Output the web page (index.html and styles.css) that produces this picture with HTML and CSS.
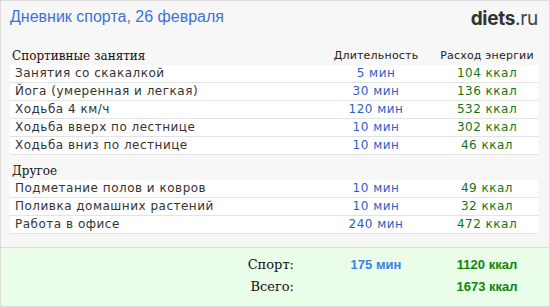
FILE: index.html
```html
<!DOCTYPE html>
<html lang="ru">
<head>
<meta charset="utf-8">
<title>Дневник спорта</title>
<link rel="stylesheet" href="styles.css">
</head>
<body>
<div class="wrap">
  <header class="top">
    <h1 class="title">Дневник спорта, 26 февраля</h1>
    <div class="logo"><b>diets</b>.ru</div>
  </header>
  <main class="main">
    <section class="section">
      <div class="head">
        <span class="sec-title">Спортивные занятия</span>
        <span class="col">Длительность</span>
        <span class="col">Расход энергии</span>
      </div>
      <div class="row"><span class="name">Занятия со скакалкой</span><span class="dur">5 мин</span><span class="kcal">104 ккал</span></div>
      <div class="row"><span class="name">Йога (умеренная и легкая)</span><span class="dur">30 мин</span><span class="kcal">136 ккал</span></div>
      <div class="row"><span class="name">Ходьба 4 км/ч</span><span class="dur">120 мин</span><span class="kcal">532 ккал</span></div>
      <div class="row"><span class="name">Ходьба вверх по лестнице</span><span class="dur">10 мин</span><span class="kcal">302 ккал</span></div>
      <div class="row"><span class="name">Ходьба вниз по лестнице</span><span class="dur">10 мин</span><span class="kcal">46 ккал</span></div>
    </section>
    <section class="section">
      <div class="head">
        <span class="sec-title">Другое</span>
      </div>
      <div class="row"><span class="name">Подметание полов и ковров</span><span class="dur">10 мин</span><span class="kcal">49 ккал</span></div>
      <div class="row"><span class="name">Поливка домашних растений</span><span class="dur">10 мин</span><span class="kcal">32 ккал</span></div>
      <div class="row"><span class="name">Работа в офисе</span><span class="dur">240 мин</span><span class="kcal">472 ккал</span></div>
    </section>
  </main>
  <footer class="totals">
    <div class="trow"><span class="tlabel">Спорт:</span><span class="tdur">175 мин</span><span class="tkcal">1120 ккал</span></div>
    <div class="trow"><span class="tlabel">Всего:</span><span class="tdur"></span><span class="tkcal">1673 ккал</span></div>
  </footer>
</div>
</body>
</html>
```
FILE: styles.css
```css
* { box-sizing: border-box; }
html, body { margin: 0; padding: 0; }
body { background: #fff; }

.wrap {
  width: 550px;
  height: 307px;
  border: 1px solid #dcdcdc;
  background: #f7f7f7;
  display: flex;
  flex-direction: column;
}

.top {
  display: flex;
  justify-content: space-between;
  align-items: flex-start;
  padding: 6px 11px 0 9px;
  height: 44px;
}
.title {
  margin: 0;
  font: normal 16px/20px "Liberation Sans", Arial, sans-serif;
  color: #3b73d9;
}
.logo {
  font: 19px/20px Inter, "Liberation Sans", sans-serif;
  color: #444;
  letter-spacing: -0.3px;
  padding-top: 2px;
}
.logo b { font-weight: 700; color: #333; }

.main {
  flex: 1;
  padding: 0 11px 0 9px;
}
.section + .section { margin-top: 5px; }

.head, .row, .trow {
  display: grid;
  grid-template-columns: 1fr 120px 102px;
}
.head {
  height: 20px;
  align-items: center;
}
.sec-title {
  font: 12px/20px "DejaVu Serif", serif;
  color: #111;
  padding-left: 2px;
  padding-top: 1px;
}
.col {
  text-align: center;
  font: 11px/20px "DejaVu Sans", Verdana, sans-serif;
  letter-spacing: 0.2px;
  color: #222;
  padding-top: 1px;
}

.row {
  background: #fff;
  height: 18px;
  border-bottom: 1px solid #e3e3e3;
  font: 12px/17px "DejaVu Sans", Verdana, sans-serif;
  letter-spacing: 0.5px;
}
.name { color: #333; padding-left: 5px; }
.dur { text-align: center; color: #2a5fc6; }
.kcal { text-align: center; color: #157515; }

.totals {
  height: 59px;
  border-top: 1px solid #dcdcdc;
  background: #e9fde9;
  padding: 6px 11px 0 9px;
}
.trow { height: 22px; align-items: baseline; }
.tlabel {
  text-align: right;
  padding-right: 22px;
  font: 13px/22px "DejaVu Serif", serif;
  color: #111;
}
.tdur, .tkcal {
  text-align: center;
  font: bold 13px/22px "Liberation Sans", Arial, sans-serif;
}
.tdur { color: #3d7fe6; }
.tkcal { color: #0d860d; }
```
